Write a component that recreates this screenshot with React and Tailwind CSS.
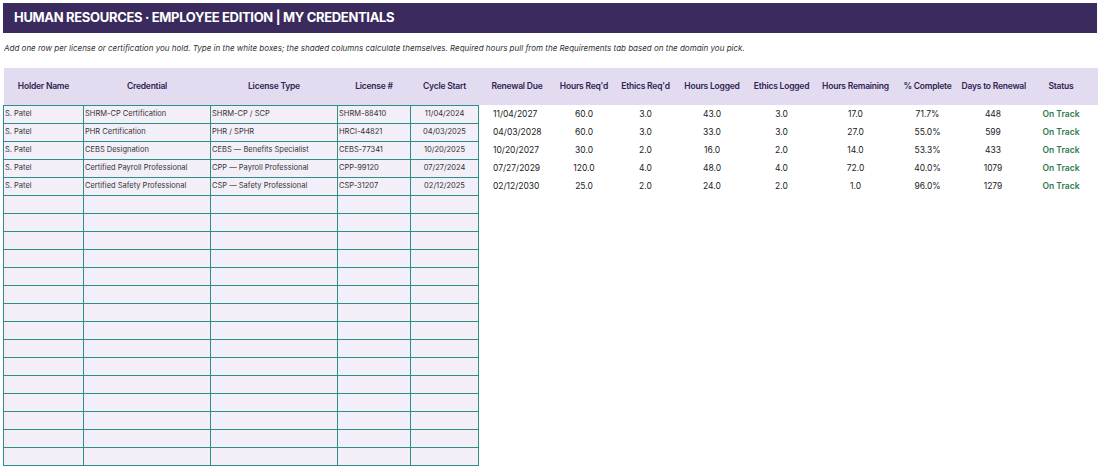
import React from 'react';

const cols = [80, 127, 127, 73, 68, 77, 57, 66, 67, 72, 76, 68, 63, 73];
const heads = ['Holder Name', 'Credential', 'License Type', 'License #', 'Cycle Start', 'Renewal Due', "Hours Req'd", "Ethics Req'd", 'Hours Logged', 'Ethics Logged', 'Hours Remaining', '% Complete', 'Days to Renewal', 'Status'];

const rows = [
  ['S. Patel', 'SHRM-CP Certification', 'SHRM-CP / SCP', 'SHRM-88410', '11/04/2024', '11/04/2027', '60.0', '3.0', '43.0', '3.0', '17.0', '71.7%', '448'],
  ['S. Patel', 'PHR Certification', 'PHR / SPHR', 'HRCI-44821', '04/03/2025', '04/03/2028', '60.0', '3.0', '33.0', '3.0', '27.0', '55.0%', '599'],
  ['S. Patel', 'CEBS Designation', 'CEBS — Benefits Specialist', 'CEBS-77341', '10/20/2025', '10/20/2027', '30.0', '2.0', '16.0', '2.0', '14.0', '53.3%', '433'],
  ['S. Patel', 'Certified Payroll Professional', 'CPP — Payroll Professional', 'CPP-99120', '07/27/2024', '07/27/2029', '120.0', '4.0', '48.0', '4.0', '72.0', '40.0%', '1079'],
  ['S. Patel', 'Certified Safety Professional', 'CSP — Safety Professional', 'CSP-31207', '02/12/2025', '02/12/2030', '25.0', '2.0', '24.0', '2.0', '1.0', '96.0%', '1279'],
];

const empty = Array.from({ length: 15 });

export default function App() {
  return (
    <div className="w-[1100px] h-[468px] bg-white overflow-hidden px-[3px] pt-[3px]" style={{ fontFamily: 'Inter, "Liberation Sans", sans-serif' }}>
      <div className="h-[30px] bg-[#3a2a5e] flex items-center px-[11px] text-white text-[13px] font-bold tracking-tight">
        HUMAN RESOURCES · EMPLOYEE EDITION | MY CREDENTIALS
      </div>
      <div className="mt-[9px] text-[8px] italic text-[#333] pl-[1px]">
        Add one row per license or certification you hold. Type in the white boxes; the shaded columns calculate themselves. Required hours pull from the Requirements tab based on the domain you pick.
      </div>
      <table className="mt-[14px] table-fixed border-collapse w-[1094px]">
        <colgroup>
          {cols.map((w, i) => <col key={i} style={{ width: w }} />)}
        </colgroup>
        <thead>
          <tr className="h-[37px] bg-[#e3dbf0]">
            {heads.map(h => (
              <th key={h} className="text-[8.5px] font-semibold text-[#2e2450] text-center whitespace-nowrap tracking-tight">{h}</th>
            ))}
          </tr>
        </thead>
        <tbody>
          {rows.map((r, i) => (
            <tr key={i} className="h-[18px]">
              {r.map((c, j) => j < 5 ? (
                <td key={j} className={`border border-[#2f8f86] bg-[#f3eff9] text-[7.5px] text-[#333] px-[1px] whitespace-nowrap ${j === 4 ? 'text-center' : ''}`}>{c}</td>
              ) : (
                <td key={j} className={`text-[8.5px] text-[#222] whitespace-nowrap ${j === 5 ? 'pl-[14px]' : 'text-center'}`}>{c}</td>
              ))}
              <td className="text-[8.5px] font-semibold text-[#2d7a4e] text-center">On Track</td>
            </tr>
          ))}
          {empty.map((_, i) => (
            <tr key={'e' + i} className="h-[18px]">
              {[0, 1, 2, 3, 4].map(j => <td key={j} className="border border-[#2f8f86] bg-[#f3eff9]"></td>)}
              {[5, 6, 7, 8, 9, 10, 11, 12, 13].map(j => <td key={j}></td>)}
            </tr>
          ))}
        </tbody>
      </table>
    </div>
  );
}
